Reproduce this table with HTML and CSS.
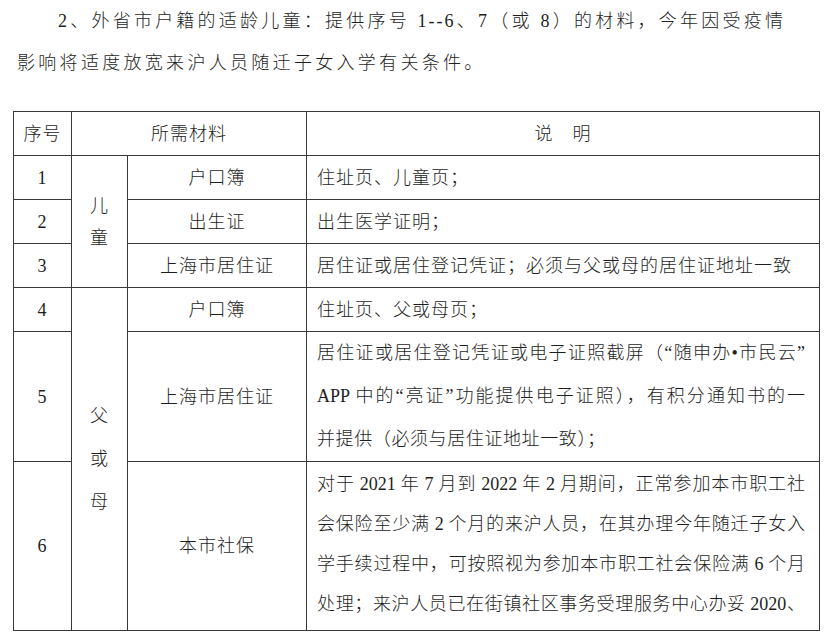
FILE: index.html
```html
<!DOCTYPE html>
<html lang="zh-CN">
<head>
<meta charset="utf-8">
<title>所需材料</title>
<link rel="stylesheet" href="styles.css">
</head>
<body>
<div class="page">
  <div class="intro">
    <div class="intro-l1">2、外省市户籍的适龄儿童：提供序号 1--6、7（或 8）的材料，今年因受疫情</div>
    <div class="intro-l2">影响将适度放宽来沪人员随迁子女入学有关条件。</div>
  </div>
  <table class="materials">
    <colgroup>
      <col class="c-no">
      <col class="c-who">
      <col class="c-item">
      <col class="c-desc">
    </colgroup>
    <tr class="r-head">
      <th>序号</th>
      <th colspan="2">所需材料</th>
      <th>说　明</th>
    </tr>
    <tr class="r-s">
      <td class="no">1</td>
      <td rowspan="3" class="who who-child">儿<br>童</td>
      <td class="item">户口簿</td>
      <td class="desc">住址页、儿童页；</td>
    </tr>
    <tr class="r-s">
      <td class="no">2</td>
      <td class="item">出生证</td>
      <td class="desc">出生医学证明；</td>
    </tr>
    <tr class="r-s">
      <td class="no">3</td>
      <td class="item">上海市居住证</td>
      <td class="desc">居住证或居住登记凭证；必须与父或母的居住证地址一致</td>
    </tr>
    <tr class="r-s">
      <td class="no">4</td>
      <td rowspan="3" class="who who-parent">父<br>或<br>母</td>
      <td class="item">户口簿</td>
      <td class="desc">住址页、父或母页；</td>
    </tr>
    <tr class="r-5">
      <td class="no">5</td>
      <td class="item">上海市居住证</td>
      <td class="desc desc-multi desc-5">
        <div class="jl">居住证或居住登记凭证或电子证照截屏（“随申办•市民云”</div>
        <div class="jl">APP 中的“亮证”功能提供电子证照），有积分通知书的一</div>
        <div class="ll">并提供（必须与居住证地址一致）；</div>
      </td>
    </tr>
    <tr class="r-6">
      <td class="no">6</td>
      <td class="item">本市社保</td>
      <td class="desc desc-multi desc-6">
        <div class="jl">对于 2021 年 7 月到 2022 年 2 月期间，正常参加本市职工社</div>
        <div class="jl">会保险至少满 2 个月的来沪人员，在其办理今年随迁子女入</div>
        <div class="jl">学手续过程中，可按照视为参加本市职工社会保险满 6 个月</div>
        <div class="jl">处理；来沪人员已在街镇社区事务受理服务中心办妥 2020、</div>
      </td>
    </tr>
  </table>
</div>
</body>
</html>
```

FILE: styles.css
```css
html, body {
  margin: 0;
  padding: 0;
  background: #ffffff;
}

body {
  color: #1e1e1e;
  font-family: "Liberation Serif", "Noto Sans CJK SC", serif;
  font-weight: 300;
}

.page {
  padding-left: 13px;
  width: 806px;
}

.intro {
  padding-left: 4px;
  font-size: 18px;
  line-height: 42px;
  letter-spacing: 2px;
  margin-bottom: 27px;
}

.intro-l1 {
  margin-left: 41px;
  width: 727px;
  text-align: justify;
  text-align-last: justify;
  white-space: normal;
}

.intro-l2 {
  letter-spacing: 3.3px;
}

.materials {
  border-collapse: collapse;
  table-layout: fixed;
  width: 806px;
  font-size: 18px;
  letter-spacing: 1px;
}

.c-no { width: 58px; }
.c-who { width: 56px; }
.c-item { width: 179px; }
.c-desc { width: 513px; }

.materials th,
.materials td {
  border: 1.5px solid #383838;
  padding: 0;
  text-align: center;
  vertical-align: middle;
  font-weight: 300;
  line-height: 24px;
}

.r-head { height: 44px; }
.r-s { height: 44px; }
.r-5 { height: 130px; }
.r-6 { height: 169px; }

.materials .desc {
  text-align: left;
  padding: 0 14px 0 10px;
}

.materials .who-child {
  line-height: 32px;
}

.materials .who-parent {
  line-height: 43px;
}

.desc-multi .jl {
  text-align: justify;
  text-align-last: justify;
  letter-spacing: 0;
  word-spacing: -0.5px;
}

.desc-multi .ll {
  letter-spacing: 0.6px;
}

.materials .desc-5 {
  line-height: 43px;
}

.materials .desc-6 {
  line-height: 40px;
  padding-bottom: 4px;
}
```
